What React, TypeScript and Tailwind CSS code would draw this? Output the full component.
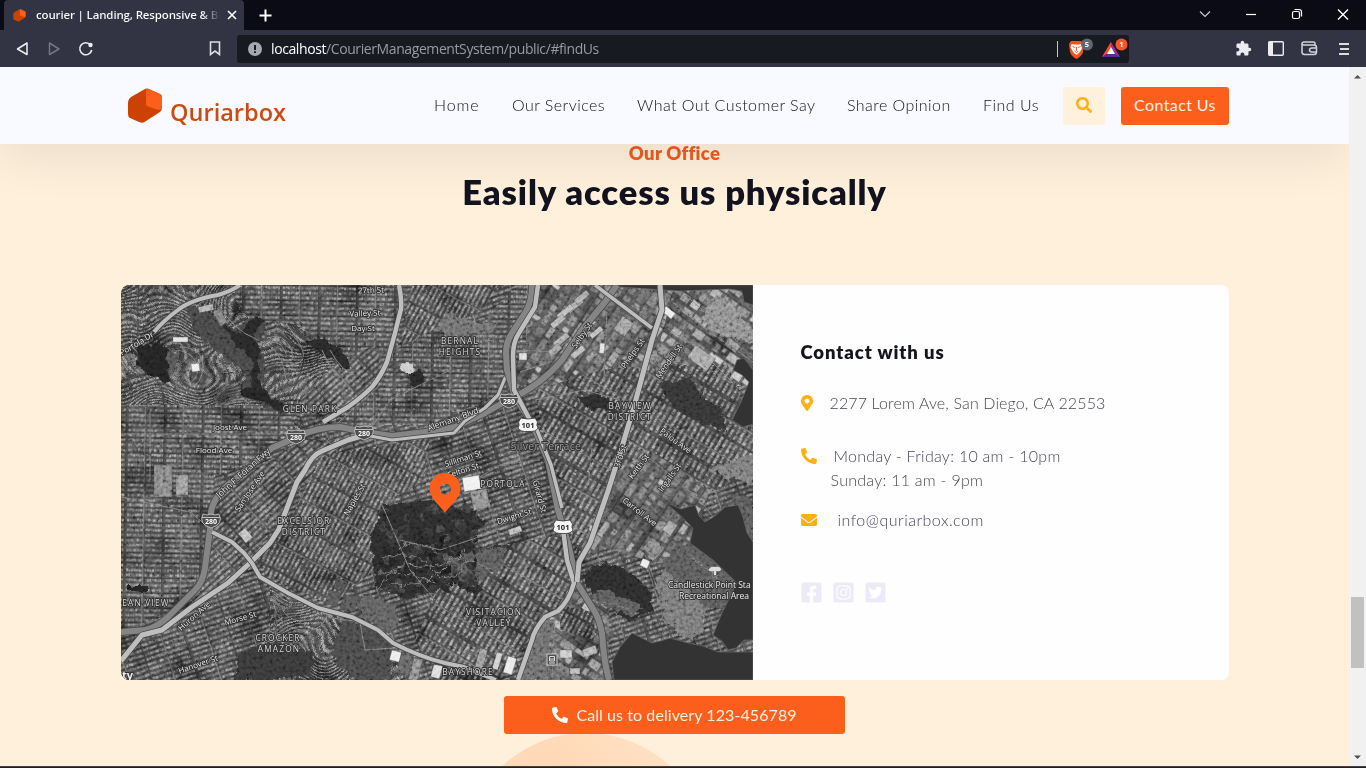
import React from "react";
import {
  FaSearch,
  FaMapMarkerAlt,
  FaPhoneAlt,
  FaEnvelope,
  FaFacebookSquare,
  FaInstagramSquare,
  FaTwitterSquare,
} from "react-icons/fa";
import { MdExtension } from "react-icons/md";

function rng(seed: number) {
  let s = seed;
  return () => {
    s = (s * 1664525 + 1013904223) % 4294967296;
    return s / 4294967296;
  };
}

const gray = (v: number) => {
  const n = Math.max(0, Math.min(255, Math.round(v)));
  return `rgb(${n},${n},${n})`;
};

/** A seamless tile of city blocks: rows of small roofs divided by streets. */
function BlockPattern({ id, seed, angle, pitch, lot, cross, base, light }: {
  id: string; seed: number; angle: number; pitch: number; lot: number; cross: number; base: number; light: number;
}) {
  const r = rng(seed);
  const w = cross * 4;
  const rows = 14;
  const h = pitch * rows;
  const out: React.ReactElement[] = [];
  for (let j = 0; j < rows; j++) {
    const y = j * pitch;
    for (let x = 0; x < w; x += lot) {
      if (x % cross < 1.5) continue;
      const v = light + (r() - 0.5) * 70;
      out.push(<rect key={`${j}-${x}`} x={x} y={y + 1.2 + r() * 0.5} width={lot * (0.7 + r() * 0.4)} height={pitch * (0.35 + r() * 0.2)} fill={gray(v)} />);
    }
    if (j % 3 === 0) out.push(<rect key={`s${j}`} x={0} y={y} width={w} height={0.8} fill={gray(36)} />);
  }
  return (
    <pattern id={id} width={w} height={h} patternUnits="userSpaceOnUse" patternTransform={`rotate(${angle})`}>
      <rect width={w} height={h} fill={gray(base)} />
      {out}
      {[0, 1, 2, 3].map((i) => <rect key={`c${i}`} x={i * cross} y={0} width={1.2} height={h} fill={gray(i % 2 ? 48 : 100)} />)}
    </pattern>
  );
}

/** Large warehouse roofs for the industrial districts. */
function WarehousePattern({ id, angle, seed }: { id: string; angle: number; seed: number }) {
  const r = rng(seed);
  const out: React.ReactElement[] = [];
  for (let y = 0; y < 132; y += 11) {
    let x = 0;
    while (x < 150) {
      const w = 3 + r() * 13;
      out.push(<rect key={`${x}-${y}`} x={x} y={y + 1.5} width={Math.min(w, 149 - x)} height={4 + r() * 5} fill={gray(85 + r() * r() * 120)} />);
      x += w + 1 + r() * 3;
    }
    if (y % 22 === 0) out.push(<path key={`p${y}`} d={`M0 ${y + 0.5}H150`} stroke="#333" strokeWidth="1.2" />);
  }
  return (
    <pattern id={id} width="150" height="132" patternUnits="userSpaceOnUse" patternTransform={`rotate(${angle})`}>
      <rect width="150" height="132" fill="#454545" />
      {out}
    </pattern>
  );
}

const districts = [
  { d: "M121 285H300V430H121Z", fill: "url(#hill)", wavy: true },
  { d: "M240 285H412L398 345L370 390L315 420L290 410L270 350L225 285Z", fill: "url(#grid)" },
  { d: "M265 320L300 325L325 350L350 380L320 400L280 400L265 370Z", fill: "url(#hill)", wavy: true },
  { d: "M300 400L340 360L375 345L385 370L350 405L315 415Z", fill: "url(#gridNE)" },
  { d: "M412 285H500L480 312L440 325L400 350Z", fill: "url(#gridSteep)" },
  { d: "M395 350L432 330L500 320L508 390L430 425H330L365 392Z", fill: "url(#grid)" },
  { d: "M121 405H300L290 437L225 475L121 480Z", fill: "url(#grid)" },
  { d: "M121 475H215L208 565L170 615L121 630Z", fill: "url(#grid)" },
  { d: "M215 495L300 440H350L300 490L250 560L210 600L175 610L207 565Z", fill: "url(#gridNE)" },
  { d: "M322 455L430 438L444 470L390 500L375 570L330 605L270 578L255 562L290 520Z", fill: "url(#gridSteep)" },
  { d: "M121 660L160 632L205 606L250 565L285 595L345 620L335 660L310 680H121Z", fill: "url(#gridSlope)" },
  { d: "M270 587L345 616L410 660L400 680H250L270 635Z", fill: "url(#hill)", wavy: true },
  { d: "M430 437L510 400L535 430L558 530L500 555L420 500Z", fill: "url(#gridSlope)" },
  { d: "M485 548L560 535L575 590L525 645L500 680H440L415 640L440 580Z", fill: "url(#gridSE)" },
  { d: "M535 285H680L660 370L580 400L515 385L512 335Z", fill: "url(#warehouses)" },
  { d: "M675 285H753V385L690 390L655 360L668 310Z", fill: "url(#warehouses2)" },
  { d: "M535 390L600 370L650 365L695 405L680 500L610 480L580 560L550 480Z", fill: "url(#gridSE)" },
  { d: "M660 365H728L753 430V475L690 500L645 440Z", fill: "url(#gridSE)" },
  { d: "M575 565L610 475L650 450L710 490L690 550L665 565L605 548Z", fill: "url(#warehouses)" },
  { d: "M515 285H535L530 330L512 380H440V350L475 330Z", fill: "url(#grid)" },
  { d: "M568 590L610 602L608 680H520L535 640Z", fill: "url(#warehouses2)" },
  { d: "M560 605L594 612L595 640L560 630Z", fill: "url(#gridSteep)" },
];

const parks = [
  { d: "M138 346L160 344Q180 349 176 371Q168 380 166 382Q145 376 137 365Z", f: "#232323" },
  { d: "M168 348Q180 349 176 371L170 378Q166 362 168 348Z", f: "#505050" },
  { d: "M187 302Q199 309 220 318L235 330L256 312L266 324L258 342L266 366L260 389L290 407L281 414L258 403L241 396L246 372L220 353L204 341Q184 323 187 302Z", f: "#424242" },
  { d: "M221 322L237 334L256 314L264 322L254 336L260 350L258 380L270 396L288 407L280 412L250 396L253 360L236 346Z", f: "#262626" },
  { d: "M304 343L322 339L337 348L351 364L345 371L330 358L314 350Z", f: "#262626" },
  { d: "M242 388L262 391L276 406L255 400L242 395Z", f: "#222" },
  { d: "M384 504L432 501L445 507L475 510L486 523L475 533L474 553L500 545L505 553L488 566L454 578L440 590L405 600L375 585L370 540Z", f: "#2c2c2c" },
  { d: "M445 556L505 547L500 571L466 582L443 574Z", f: "#555" },
  { d: "M447 312Q463 319 480 323L499 323L490 334L450 337L436 328Z", f: "#686868" },
  { d: "M353 605L370 595L395 605L399 623L388 633L365 620Z", f: "#5a5a5a" },
  { d: "M580 575L605 561L628 570L650 592L653 611L628 621L595 597Z", f: "#2a2a2a" },
  { d: "M587 598L605 588L643 607L630 617L604 606Z", f: "#555" },
  { d: "M578 397L599 393L618 403L604 408L592 410L581 403Z", f: "#292929" },
  { d: "M660 383L690 378L705 400L720 407L725 430L700 422L672 407Z", f: "#303030" },
  { d: "M409 372Q421 367 425 377Q423 387 416 388L408 382Z", f: "#272727" },
  { d: "M240 651L275 642L315 653L310 674L280 680H235Z", f: "#343434" },
  { d: "M345 617L376 632L395 645L388 680H355L330 655Z", f: "#444" },
  { d: "M127 585H148V592Q137 593 127 589Z", f: "#232323" },
  { d: "M531 640L547 615L554 620L548 680H520Z", f: "#666" },
  { d: "M655 580L666 570L705 600L704 630L692 640L665 625Z", f: "#707070" },
  { d: "M677 550L704 530L733 560L750 578L721 610L703 606L660 565Z", f: "#555" },
  { d: "M709 468L753 455V485L720 475Z", f: "#737373" },
  { d: "M725 507L738 494L753 499V542L745 532L738 504Z", f: "#555" },
  { d: "M717 293L735 309L753 330V343L721 335L701 321L704 309Z", f: "#858585" },
];

const water = [
  "M612 662L620 647L632 633L640 637L652 643L664 640L670 638L688 643L703 646L718 652H753V680H614Z",
  "M665 502L681 509L695 505L699 516L705 522L715 516L725 507L738 505L743 517L747 533L753 542V640L744 640L736 648L728 650L722 641L713 635L722 613L737 583L713 560L690 543L693 528L682 517Z",
  "M617 285H753V305L744 302L742 291L729 289L680 291L620 287Z",
  "M737 360L744 358L753 370V424L743 427L732 420L741 402L749 382L742 375L733 370Z",
];

const freeway = "#858585";
const arterial = "#bebebe";
const roads = [
  { c: freeway, w: 6, d: "M121 632L145 630Q156 628 168 617L195 590Q203 582 205 568L210 530L211 512Q214 494 238 477L272 448L297 437Q316 427 340 427L365 432L392 436L425 432L455 427L485 413L508 400Q540 386 562 360L582 330L605 302L617 285" },
  { c: arterial, w: 3.2, d: "M345 441L365 435L392 440L445 434L454 433L465 421L485 408L498 395L505 378L514 375" },
  { c: arterial, w: 5, d: "M121 661L142 635L162 630L192 607L228 583L250 563L270 543L279 529L285 513L297 482L305 470Q312 455 322 451L348 440L365 435" },
  { c: arterial, w: 4, d: "M240 285Q232 291 218 295Q190 300 178 310Q163 321 154 332" },
  { c: arterial, w: 4.5, d: "M399 285Q402 301 401 309L395 333L387 362Q381 376 372 387Q362 397 348 407L323 422" },
  { c: arterial, w: 4, d: "M212 532L232 542L244 553L252 563L260 577L288 593L318 608L352 617L378 630L393 643Q420 657 445 663L464 667L496 680" },
  { c: freeway, w: 6, d: "M532 285Q532 302 525 313L512 333Q506 342 506 353L507 370L515 397L532 423L548 460L558 510L568 543L577 583L592 607Q599 617 602 633Q604 663 609 680" },
  { c: arterial, w: 4.5, d: "M538 285L535 307L519 333Q513 342 513 356L514 390L530 420" },
  { c: arterial, w: 3.5, d: "M533 420L551 465L562 508" },
  { c: arterial, w: 4.5, d: "M562 521L567 560L574 583Q569 601 558 611L545 617Q534 630 532 640L518 680" },
  { c: arterial, w: 5, d: "M660 285L662 310L652 340L635 403L622 447L608 491L590 543L579 562L577 582" },
  { c: arterial, w: 3.5, d: "M595 285L652 328" },
];

const minor = [
  "M121 345L152 332", "M608 285L604 380", "M588 486L592 448", "M215 300Q232 330 258 340T286 380",
  "M670 300L710 332L753 362", "M680 290L742 346", "M555 617L552 680", "M645 555L658 590L670 620L700 635",
  "M370 430L390 400L450 370", "M440 500L500 465L540 460", "M535 400L585 390L620 400", "M330 430L380 385",
  "M655 320L700 350L740 390", "M121 497L190 512L212 530", "M640 450L700 500L735 545",
  "M515 350L555 352L600 310", "M520 372L565 357", "M121 434H290", "M150 410V480", "M400 540L440 550L500 530",
  "M380 500L410 570L435 600", "M332 618L360 622L365 650L395 648",
];

const labels: [string, number, number, number, number][] = [
  ["27th St", 371, 293, 8, -2], ["Valley St", 365, 316, 8, -2], ["Day St", 363, 331, 8, 0],
  ["Joost Ave", 230, 430, 8, 0], ["Flood Ave", 214, 453, 8, 0], ["Portola Dr", 138, 346, 8, -31],
  ["Alemany Blvd", 454, 422, 8.5, -20], ["Silliman St", 464, 461, 8, -18], ["Felton St", 464, 473, 8, -18],
  ["Selby St", 584, 337, 8, -55], ["Phelps St", 635, 355, 8, -55], ["Mendell St", 671, 363, 8, -55],
  ["Palou Ave", 674, 443, 8, 36], ["Keith St", 641, 468, 8, -53], ["Ingalls St", 672, 479, 8, -55],
  ["3rd St", 623, 457, 8.5, -72], ["Girard St", 537, 497, 8, 75], ["Dwight St", 515, 519, 8, -17],
  ["Carroll Ave", 638, 514, 8, 38], ["John F. Foran Fwy", 245, 475, 8.5, -42], ["San Jose Ave", 252, 493, 8, -56],
  ["Naples St", 357, 501, 8, -60], ["Huron Ave", 196, 618, 8, -42], ["Morse St", 241, 621, 8, -16],
  ["Hanover St", 199, 667, 8, -19],
];

const areas: [string, number, number][] = [
  ["GLEN PARK", 310, 412], ["BERNAL", 460, 344], ["HEIGHTS", 460, 355], ["BAYVIEW", 630, 409], ["DISTRICT", 630, 420],
  ["PORTOLA", 503, 487], ["EXCELSIOR", 304, 524], ["DISTRICT", 304, 535], ["CROCKER", 278, 641], ["AMAZON", 279, 652],
  ["VISITACION", 494, 615], ["VALLEY", 494, 626], ["BAYSHORE", 468, 675], ["EAN VIEW", 146, 606],
];

function Shield({ x, y }: { x: number; y: number }) {
  return (
    <g>
      <path d={`M${x - 8} ${y - 6}Q${x - 4} ${y - 4} ${x} ${y - 6}Q${x + 4} ${y - 4} ${x + 8} ${y - 6}Q${x + 13} ${y + 4} ${x} ${y + 8}Q${x - 13} ${y + 4} ${x - 8} ${y - 6}Z`} fill="#4d4d4d" stroke="#d2d2d2" strokeWidth=".8" />
      <path d={`M${x - 9} ${y - 2.5}H${x + 9}`} stroke="#ddd" strokeWidth=".8" />
      <text x={x} y={y + 4} fill="#fff" fontSize="7" fontWeight="700" textAnchor="middle">280</text>
    </g>
  );
}

function Route101({ x, y }: { x: number; y: number }) {
  return (
    <g>
      <path d={`M${x - 7} ${y - 7}Q${x} ${y - 5} ${x + 7} ${y - 7}L${x + 9.5} ${y - 3}Q${x + 8} ${y} ${x + 10} ${y + 3}Q${x + 8} ${y + 7} ${x} ${y + 6.5}Q${x - 8} ${y + 7} ${x - 10} ${y + 3}Q${x - 8} ${y} ${x - 9.5} ${y - 3}Z`} fill="#f4f4f4" stroke="#333" strokeWidth=".8" />
      <text x={x} y={y + 2.7} fill="#222" fontSize="7.5" fontWeight="700" textAnchor="middle">101</text>
    </g>
  );
}

function CityMap() {
  const r = rng(77);
  const roofs: [number, number, number, number, number, number][] = [
    [173, 337, 15, 5, 0, 225], [191, 364, 8, 8, -8, 235], [198, 307, 15, 6, -12, 175], [213, 312, 8, 16, -28, 120],
    [154, 465, 18, 32, 0, 125], [176, 475, 12, 20, 0, 150], [392, 650, 10, 10, 15, 235],
    [402, 652, 12, 21, 15, 95], [414, 658, 9, 22, 15, 135], [434, 664, 9, 13, 15, 220], [462, 478, 17, 14, -10, 240],
    [470, 492, 17, 19, -12, 135], [508, 656, 9, 17, 17, 232], [497, 652, 6, 17, 17, 205], [480, 648, 8, 20, 15, 145],
    [329, 590, 12, 14, 15, 82], [344, 594, 15, 15, 15, 82], [338, 578, 10, 11, 25, 78], [696, 345, 24, 15, 36, 160],
    [666, 306, 12, 7, 38, 235], [623, 316, 13, 16, 35, 155], [600, 343, 5, 10, 5, 225], [519, 353, 8, 7, 0, 220],
    [643, 558, 8, 8, 25, 235], [652, 537, 17, 15, 40, 125], [245, 528, 12, 9, 50, 190], [560, 650, 12, 8, 0, 200],
    [582, 650, 14, 8, -20, 170], [570, 668, 10, 6, 0, 180], [508, 530, 13, 6, -20, 190], [669, 520, 10, 12, 35, 160],
    [580, 297, 6, 18, 50, 170], [570, 304, 6, 18, 50, 180], [586, 290, 6, 16, 50, 165], [562, 314, 6, 16, 50, 175],
    [566, 332, 6, 17, 50, 165], [582, 345, 6, 15, 50, 180], [592, 318, 6, 17, 50, 170], [600, 326, 5, 14, 50, 185],
    [558, 343, 7, 14, 50, 150], [594, 350, 6, 12, 50, 140],
  ];
  return (
    <svg viewBox="121 285 632 395" width="632" height="395" className="block h-[395px] w-[632px] shrink-0 rounded-l-lg" fontFamily="'Open Sans', 'Noto Sans', sans-serif">
      <defs>
        <BlockPattern id="grid" seed={4} angle={1} pitch={5} lot={2.5} cross={19} base={58} light={112} />
        <BlockPattern id="gridNE" seed={9} angle={-42} pitch={5} lot={2.6} cross={26} base={56} light={120} />
        <BlockPattern id="gridSteep" seed={12} angle={-62} pitch={4.6} lot={2.5} cross={25} base={54} light={124} />
        <BlockPattern id="gridSlope" seed={19} angle={-18} pitch={5} lot={2.4} cross={22} base={54} light={114} />
        <BlockPattern id="gridSE" seed={25} angle={-60} pitch={5.5} lot={3} cross={17} base={55} light={124} />
        <BlockPattern id="hill" seed={31} angle={-12} pitch={5.6} lot={2.5} cross={70} base={50} light={118} />
        <WarehousePattern id="warehouses" seed={5} angle={-56} />
        <WarehousePattern id="warehouses2" seed={8} angle={35} />
        <filter id="bend" x="-20%" y="-20%" width="140%" height="140%">
          <feTurbulence type="fractalNoise" baseFrequency=".022" numOctaves="1" seed="11" />
          <feDisplacementMap in="SourceGraphic" scale="100" xChannelSelector="R" yChannelSelector="G" />
        </filter>
        <filter id="rough" x="-10%" y="-10%" width="120%" height="120%">
          <feTurbulence type="fractalNoise" baseFrequency=".13" numOctaves="3" seed="3" />
          <feDisplacementMap in="SourceGraphic" scale="9" xChannelSelector="R" yChannelSelector="G" />
        </filter>
        <filter id="grain" x="0" y="0" width="100%" height="100%">
          <feTurbulence type="fractalNoise" baseFrequency=".3" numOctaves="2" seed="8" />
          <feColorMatrix values="1.8 0 0 0 -.42 1.8 0 0 0 -.42 1.8 0 0 0 -.42 0 0 0 0 1" />
        </filter>
        <filter id="shade" x="0" y="0" width="100%" height="100%">
          <feTurbulence type="fractalNoise" baseFrequency=".03" numOctaves="3" seed="21" />
          <feColorMatrix values="2 0 0 0 -.5 2 0 0 0 -.5 2 0 0 0 -.5 0 0 0 0 1" />
        </filter>
        {districts.map((a, i) => <clipPath key={i} id={`area${i}`}><path d={a.d} /></clipPath>)}
      </defs>
      <rect x="121" y="285" width="632" height="395" fill="url(#gridSlope)" />
      {districts.map((a, i) => (
        <g key={i} clipPath={`url(#area${i})`}>
          {a.wavy
            ? <rect x="60" y="230" width="440" height="500" fill={a.fill} filter="url(#bend)" />
            : <path d={a.d} fill={a.fill} />}
        </g>
      ))}
      <rect x="121" y="285" width="632" height="395" filter="url(#shade)" opacity=".4" className="mix-blend-soft-light" />
      <g filter="url(#rough)">
        {parks.map((p) => <path key={p.d} d={p.d} fill={p.f} />)}
        {Array.from({ length: 170 }, (_, i) => {
          const x = 378 + r() * 100;
          const y = 507 + r() * 84;
          return <ellipse key={i} cx={x} cy={y} rx={1.5 + r() * 4} ry={1.5 + r() * 3} fill={gray(28 + r() * 42)} />;
        })}
        <path d="M378 590Q395 560 420 565T465 550M388 583Q420 590 450 565M380 572Q410 570 435 584M398 550Q420 535 440 555M384 560Q410 545 430 568T468 560M590 602Q615 600 640 615M670 585L695 602L683 622M690 555L724 584M455 557L495 570" fill="none" stroke="#757575" strokeWidth="1" />
        <ellipse cx="407" cy="367" rx="6" ry="5" fill="#c8c8c8" />
      </g>
      <g fill="none" stroke="#757575" strokeWidth="1">
        {minor.map((d) => <path key={d} d={d} />)}
        <path d="M178 350Q195 353 197 367T188 382M184 347Q204 350 203 367T190 387M264 332Q288 324 300 345T283 365M267 338Q284 332 291 349T280 359M269 343Q280 340 285 351T277 353M330 350Q342 372 355 375M322 350Q333 378 350 382M273 600Q277 627 302 630T329 605M281 605Q285 620 301 621T319 606" />
      </g>
      {roofs.map(([x, y, w, h, a, v], i) => <rect key={i} x={x} y={y} width={w} height={h} fill={gray(v)} stroke="#444" strokeWidth=".4" transform={`rotate(${a} ${x} ${y})`} />)}
      <rect x="121" y="285" width="632" height="395" filter="url(#grain)" opacity=".33" className="mix-blend-overlay" />
      {water.map((d) => <path key={d} d={d} fill="#333" stroke="#656565" strokeWidth=".7" />)}
      {roads.map((p) => (
        <g key={p.d} fill="none" strokeLinejoin="round">
          <path d={p.d} stroke="#494949" strokeWidth={p.w + 1.5} />
          <path d={p.d} stroke={p.c} strokeWidth={p.w} />
        </g>
      ))}
      <g stroke="#303030" strokeWidth="1.8" strokeLinejoin="round" paintOrder="stroke" fill="#ececec" textAnchor="middle">
        {labels.map(([t, x, y, s, a]) => <text key={t} x={x} y={y} fontSize={s} fontWeight="500" transform={`rotate(${a} ${x} ${y})`}>{t}</text>)}
        {areas.map(([t, x, y]) => <text key={t + y} x={x} y={y} fontSize="8.3" fontWeight="500" letterSpacing="1.2" fill="#d6d6d6">{t}</text>)}
        <text x="546" y="450" fontSize="10.5" letterSpacing=".3" fill="#9a9a9a">Silver Terrace</text>
        <text x="668" y="588" fontSize="8.5" textAnchor="start">Candlestick Point Sta</text>
        <text x="679" y="599" fontSize="8.5" textAnchor="start">Recreational Area</text>
        <text x="122" y="679" fontSize="11" fontWeight="700" textAnchor="start">ty</text>
      </g>
      <Shield x={296} y={436} /><Shield x={364} y={432} /><Shield x={509} y={400} /><Shield x={211} y={520} />
      <Route101 x={528} y={425} /><Route101 x={563} y={527} />
      <path d="M714 575V571Q708 572 709 569Q711 566 715 567Q720 566 721 569Q721 572 716 571V575Z" fill="#ddd" />
      <rect x="547" y="654" width="10" height="11" fill="#505050" stroke="#ccc" />
      <path d="M549.500 656.500H554.500V661H549.500ZM549 663H555M550 659H554" fill="none" stroke="#ddd" />
      <path fillRule="evenodd" d="M445 473C454 473 460.500 480 460.500 488.500C460.500 498 450 506 445 512.500C440 506 429.500 498 429.500 488.500C429.500 480 436 473 445 473ZM445.500 483.500A5.500 5.500 0 1 0 445.500 494.500A5.500 5.500 0 1 0 445.500 483.500Z" fill="#fb5f1b" />
    </svg>
  );
}

function Box({ size }: { size: number }) {
  return (
    <svg viewBox="0 0 36 36" width={size} height={size}>
      <path d="M18 1Q20 0 22 1L33 6Q35 7 35 10V20Q35 22 33 24L19 33Q16 36 12 34L3 30Q1 29 1 26V14Q1 11 4 9Z" fill="#cb4204" />
      <path d="M20 .5L33 6Q35 7 35 10V19Q35 21 33 22L28 21L20 18Q19 18 19 15V3Q19 1 20 .5Z" fill="#fc5f1b" />
    </svg>
  );
}

function Browser() {
  return (
    <header className="font-['Open_Sans','Noto_Sans',sans-serif]">
      <div className="flex h-[30px] bg-[#0a0b14] text-white">
        <div className="ml-1 flex w-[240px] items-center rounded-t bg-[#323443] pl-[9px] pr-[7px]">
          <Box size={13} />
          <span className="ml-[10px] w-[184px] overflow-hidden whitespace-nowrap bg-gradient-to-r from-white from-90% to-transparent bg-clip-text text-[11.5px] font-semibold tracking-[-0.15px] text-transparent">courier | Landing, Responsive &amp; Bu</span>
          <svg width="10" height="10" viewBox="0 0 10 10" className="ml-auto" stroke="#fff" strokeWidth="1.7"><path d="M1 1L9 9M9 1L1 9" /></svg>
        </div>
        <svg width="13" height="13" viewBox="0 0 13 13" className="ml-[15px] mt-[9px]" stroke="#fff" strokeWidth="2"><path d="M6.500 .5V12.500M.5 6.500H12.500" /></svg>
        <div className="ml-auto flex items-start pt-2">
          <svg width="150" height="14" viewBox="0 0 150 14" fill="none" stroke="#fff" strokeWidth="1.200" className="mr-[17px]">
            <path d="M1 3.500L6 8.500L11 3.500" stroke="#ccc" /><path d="M47 6.500H57" />
            <rect x="93.500" y="3.500" width="7" height="7" rx="1.500" /><path d="M95.500 1.500H100Q102.500 1.500 102.500 4V8.500" />
            <path d="M139 1.500L149 11.500M149 1.500L139 11.500" strokeWidth="1.400" />
          </svg>
        </div>
      </div>
      <div className="flex h-[37px] items-center bg-[#323443]">
        <svg width="80" height="16" viewBox="0 0 80 16" fill="none" strokeWidth="1.500" strokeLinejoin="round" className="ml-[16px]">
          <path d="M11 2V13.500L1.500 8Z" stroke="#eee" /><path d="M33.500 2V13.500L43 8Z" stroke="#747681" />
          <path d="M74.500 4A6 6 0 1 0 75.700 9" stroke="#eee" strokeWidth="1.600" /><circle cx="74.500" cy="4" r="2.200" fill="#eee" />
        </svg>
        <svg width="12" height="15" viewBox="0 0 12 15" fill="none" stroke="#ddd" strokeWidth="1.600" className="ml-[113px]"><path d="M1.500 1H10.500V13.500L6 10L1.500 13.500Z" /></svg>
        <div className="ml-[16px] flex h-7 w-[892px] items-center rounded-[3px] bg-[#181a21] pl-[11px]">
          <svg width="14" height="14" viewBox="0 0 14 14"><circle cx="7" cy="7" r="7" fill="#a6a7af" /><path d="M7 3V8M7 9.300V11" stroke="#181a21" strokeWidth="2" /></svg>
          <span className="ml-[9px] whitespace-nowrap text-[14px] leading-5 tracking-[-0.405px] text-[#979aa4]"><span className="text-white">localhost</span>/CourierManagementSystem/public/#findUs</span>
          <i className="ml-auto h-4 w-px bg-[#c5c6cc]" />
          <svg width="71" height="22" viewBox="0 0 71 22" fontSize="7.500" fontWeight="700" textAnchor="middle">
            <path d="M13 3H23L26 6L25 14Q24 18 18.500 21Q13 18 12 14L11 6Z" fill="#f6501c" />
            <path d="M13.500 6L16 6.500H21L23.500 6L24.500 9L22.500 13L21 15L18.500 17L16 15L14.500 13L12.500 9Z" fill="#fff" />
            <path d="M14.500 8.500L17 9.500M22.500 8.500L20 9.500M18.500 9V13M16.500 13L18.500 14.500L20.500 13" stroke="#f6501c" strokeWidth=".9" fill="none" />
            <circle cx="29" cy="6.500" r="6" fill="#626674" /><text x="29" y="9.300" fill="#fff">5</text>
            <path d="M53 4L62 19H44Z" fill="#9e2ca1" /><path d="M53 4L44 19L53 13Z" fill="#ff4724" /><path d="M44 19H62L53 13Z" fill="#5a2c90" /><path d="M53 9L57 16H49Z" fill="#fff" />
            <circle cx="63.500" cy="6.500" r="6" fill="#fb542b" /><text x="63.500" y="9.300" fill="#fff">1</text>
          </svg>
        </div>
        <div className="ml-auto mr-4 flex items-center gap-[17px]">
          <MdExtension size={17} color="#ececef" className="-mr-px" />
          <svg width="16" height="15" viewBox="0 0 16 15"><rect x=".7" y=".7" width="14.600" height="13.600" rx="1" fill="none" stroke="#ececef" strokeWidth="1.400" /><path d="M1 1H5V14H1Z" fill="#ececef" /></svg>
          <svg width="17" height="15" viewBox="0 0 17 15" fill="none" stroke="#d2d3d8" strokeWidth="1.500"><path d="M14 4V2.500Q14 1 12.500 1H3Q1 1 1 3V11Q1 13.500 3.500 13.500H13Q15.500 13.500 15.500 11V6.500Q15.500 4 13 4H3Q1 4 1 2.500M15.500 7H11Q8.500 7 8.500 9T11 11H15.500" /></svg>
          <svg width="12" height="14" viewBox="0 0 12 14" className="ml-[3px]" stroke="#ddd" strokeWidth="1.800"><path d="M1 2H11M2 7H11M1 12H11" /></svg>
        </div>
      </div>
    </header>
  );
}

export default function App() {
  return (
    <div className="flex h-[768px] w-[1366px] flex-col overflow-hidden font-[Lato,sans-serif]">
      <Browser />
      <div className="flex h-[699px]">
        <main className="relative flex w-[1349px] flex-col items-center overflow-hidden bg-[#fff0dc]">
          <nav className="z-10 flex h-[77px] w-full shrink-0 items-center bg-[#f9faff] pl-[127px] pr-[120px] shadow-[0_16px_48px_rgba(0,0,0,0.075)]">
            <div className="flex h-[35px] items-start">
              <Box size={36} />
              <span className="ml-[7px] mt-[9px] font-['Open_Sans',sans-serif] text-[23.500px] font-semibold leading-[30px] tracking-[0.020px] text-[#cc4b13]">Quriarbox</span>
            </div>
            <div className="mb-[2px] ml-auto flex items-center text-[16px] font-light leading-6 text-[#101018]">
              <span className="w-[78px] whitespace-nowrap tracking-[0.850px]">Home</span>
              <span className="w-[125px] whitespace-nowrap tracking-[0.460px]">Our Services</span>
              <span className="w-[210px] whitespace-nowrap tracking-[0.440px]">What Out Customer Say</span>
              <span className="w-[136px] whitespace-nowrap tracking-[0.460px]">Share Opinion</span>
              <span className="w-[80px] whitespace-nowrap tracking-[0.500px]">Find Us</span>
            </div>
            <span className="flex h-[38px] w-[42px] items-center justify-center rounded-[3px] bg-[#fff1db]"><FaSearch size={16} color="#ffaf16" className="mb-px" /></span>
            <span className="ml-4 flex h-[38px] w-[108px] items-center justify-center whitespace-nowrap rounded-[3px] bg-[#fb5f1b] pb-[2px] text-[16px] tracking-[0.400px] text-[#fff1e8]">Contact Us</span>
          </nav>
          <h3 className="-mt-px whitespace-nowrap text-[18.500px] font-extrabold leading-5 tracking-[0.260px] text-[#ef5c20]">Our Office</h3>
          <h1 className="mt-[6px] whitespace-nowrap text-[34.500px] font-extrabold leading-[46px] tracking-[0.880px] text-[#12131f]">Easily access us physically</h1>
          <section className="mt-[70px] flex h-[395px] w-[1108px] shrink-0 overflow-hidden rounded-lg bg-[#fefefe]">
            <CityMap />
            <div className="flex flex-col pl-12 pt-[55px] font-light leading-6 text-[#484556]">
              <h2 className="whitespace-nowrap text-[18.500px] font-extrabold tracking-[0.900px] text-[#15151f]">Contact with us</h2>
              <div className="mt-[27px] flex items-center"><FaMapMarkerAlt size={16} color="#ffaf16" className="-ml-0.5 mr-[15px]" /><span className="whitespace-nowrap tracking-[0.130px]">2277 Lorem Ave, San Diego, CA 22553</span></div>
              <div className="mt-[29px] flex items-center"><FaPhoneAlt size={16} color="#ffaf16" className="mr-[17px]" /><span className="whitespace-nowrap tracking-[0.270px]">Monday - Friday: 10 am - 10pm</span></div>
              <span className="ml-[30px] whitespace-nowrap tracking-[0.260px]">Sunday: 11 am - 9pm</span>
              <div className="mt-4 flex items-center"><FaEnvelope size={16} color="#ffaf16" className="mr-[21px]" /><span className="whitespace-nowrap tracking-[0.480px]">info@quriarbox.com</span></div>
              <div className="-ml-px mt-[49px] flex gap-[9px] text-[23px] text-[#ebeaf5]"><FaFacebookSquare /><FaInstagramSquare /><FaTwitterSquare /></div>
            </div>
          </section>
          <div className="absolute left-[463px] top-[666px] h-[246px] w-[246px] rounded-full bg-[radial-gradient(circle_at_32%_22%,#ffd7b2_0%,#ffdfc2_42%,#ffe1c9_70%)]" />
          <button className="relative mt-4 flex h-[38px] w-[341px] shrink-0 items-center justify-center gap-2 whitespace-nowrap rounded-[3px] bg-[#fb5f1b] pb-px text-[16px] text-[#fff1e8]"><FaPhoneAlt size={16} color="#fff" /><span className="tracking-[0.080px]">Call us to delivery 123-456789</span></button>
        </main>
        <aside className="flex w-[17px] flex-col items-center bg-[#f1f1f1]">
          <svg width="9" height="5" viewBox="0 0 9 5" className="mt-[7px]"><path d="M1 4.500L4.500 1L8 4.500Z" fill="#505050" /></svg>
          <i className="mt-[518px] h-[71px] w-[13px] bg-[#c1c1c1]" />
          <svg width="9" height="5" viewBox="0 0 9 5" className="mb-[6px] mt-auto"><path d="M1 .5L4.500 4L8 .5Z" fill="#505050" /></svg>
        </aside>
      </div>
      <div className="h-[2px] border-t border-[#414141] bg-[#202124]" />
    </div>
  );
}
